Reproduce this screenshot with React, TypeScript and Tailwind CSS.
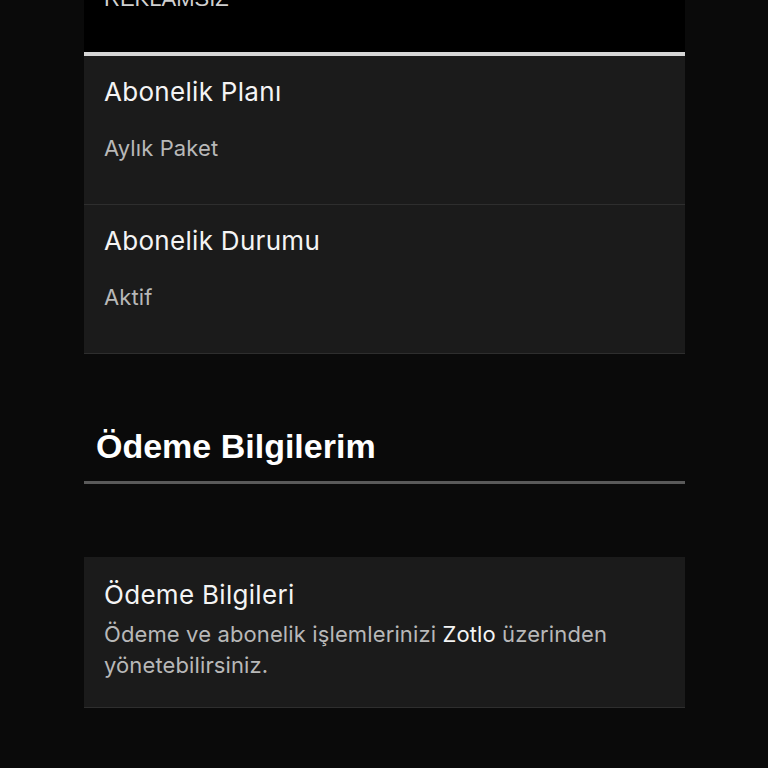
const rows = [
  { label: "Abonelik Planı", value: "Aylık Paket" },
  { label: "Abonelik Durumu", value: "Aktif" },
];

export default function App() {
  return (
    <div className="min-h-screen bg-[#0a0a0a] font-['Inter','Noto_Sans',sans-serif]">
      <div className="ml-[84px] w-[601px]">
        <div className="h-[52px] overflow-hidden bg-black px-5">
          <p className="-mt-[15px] font-['Liberation_Sans',Arial,sans-serif] text-[22px] leading-[28px] text-[#d0d0d0]">
            REKLAMSIZ
          </p>
        </div>

        <div className="border-t-4 border-[#d6d6d6]">
          {rows.map((r) => (
            <div key={r.label} className="flex flex-col gap-[26px] border-b border-[#2e2e2e] bg-[#1b1b1b] px-5 pt-5 pb-[42px]">
              <h3 className="text-[26px] leading-[32px] tracking-[0.3px] text-[#f4f4f4]">{r.label}</h3>
              <p className="text-[22px] leading-[28px] tracking-[0.1px] text-[#b8b8b8]">{r.value}</p>
            </div>
          ))}
        </div>

        <div className="mt-[72px] border-b-[3px] border-[#5a5a5a] pb-[15px] pl-3">
          <h2 className="font-['Liberation_Sans',Arial,sans-serif] text-[34px] font-bold leading-[40px] text-white">
            Ödeme Bilgilerim
          </h2>
        </div>

        <div className="mt-[73px] border-b border-[#2e2e2e] bg-[#1b1b1b] px-5 pt-[22px] pb-[26px]">
          <h3 className="text-[26px] leading-[32px] tracking-[0.3px] text-[#f4f4f4]">Ödeme Bilgileri</h3>
          <p className="mt-[8px] text-[22px] leading-[31px] tracking-[0.12px] text-[#b8b8b8]">
            Ödeme ve abonelik işlemlerinizi <span className="text-[#f4f4f4]">Zotlo</span> üzerinden yönetebilirsiniz.
          </p>
        </div>
      </div>
    </div>
  );
}
